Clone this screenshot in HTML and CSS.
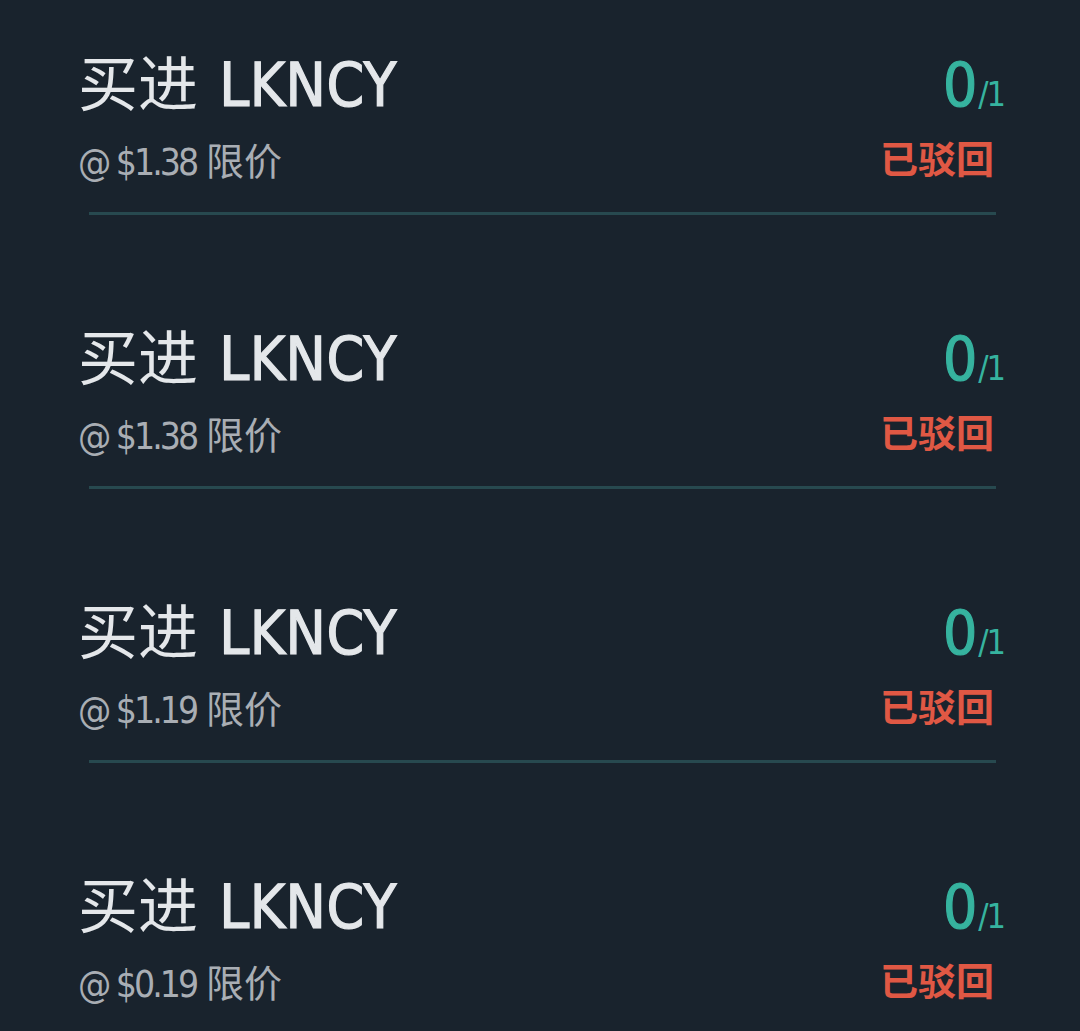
FILE: index.html
```html
<!DOCTYPE html>
<html lang="zh-CN">
<head>
    <meta charset="UTF-8">
    <meta name="viewport" content="width=device-width, initial-scale=1.0">
    <title>订单</title>
    <link rel="stylesheet" href="styles.css">
</head>
<body>
    <div class="orders">
        <div class="order">
            <div class="order-head">
                <span class="order-title">买进 <span class="symbol">LKNCY</span></span>
                <span class="order-fill"><span class="filled">0</span><span class="total">/1</span></span>
            </div>
            <div class="order-sub">
                <span class="order-price"><span class="amount">@ $1.38</span> 限价</span>
                <span class="order-status">已驳回</span>
            </div>
            <div class="divider"></div>
        </div>
        <div class="order">
            <div class="order-head">
                <span class="order-title">买进 <span class="symbol">LKNCY</span></span>
                <span class="order-fill"><span class="filled">0</span><span class="total">/1</span></span>
            </div>
            <div class="order-sub">
                <span class="order-price"><span class="amount">@ $1.38</span> 限价</span>
                <span class="order-status">已驳回</span>
            </div>
            <div class="divider"></div>
        </div>
        <div class="order">
            <div class="order-head">
                <span class="order-title">买进 <span class="symbol">LKNCY</span></span>
                <span class="order-fill"><span class="filled">0</span><span class="total">/1</span></span>
            </div>
            <div class="order-sub">
                <span class="order-price"><span class="amount">@ $1.19</span> 限价</span>
                <span class="order-status">已驳回</span>
            </div>
            <div class="divider"></div>
        </div>
        <div class="order">
            <div class="order-head">
                <span class="order-title">买进 <span class="symbol">LKNCY</span></span>
                <span class="order-fill"><span class="filled">0</span><span class="total">/1</span></span>
            </div>
            <div class="order-sub">
                <span class="order-price"><span class="amount">@ $0.19</span> 限价</span>
                <span class="order-status">已驳回</span>
            </div>
        </div>
    </div>
</body>
</html>
```

FILE: styles.css
```css
body {
    margin: 0;
    padding: 0;
    background: #19232d;
    font-family: "DejaVu Sans Condensed", "Noto Sans CJK SC", sans-serif;
    overflow: hidden;
}

.orders {
    padding: 0 78px;
}

.order {
    padding-top: 109px;
}

.order:first-child {
    padding-top: 50px;
}

.order-head {
    display: flex;
    justify-content: space-between;
    align-items: baseline;
    height: 70px;
    line-height: 70px;
}

.order-title {
    font-size: 60px;
    color: #e4e7ea;
}

.symbol {
    margin-left: 4px;
    letter-spacing: 0.5px;
    -webkit-text-stroke: 1.2px #e4e7ea;
}

.order-fill {
    color: #36b39f;
    margin-right: -2px;
}

.filled {
    font-size: 60px;
    letter-spacing: 1px;
    -webkit-text-stroke: 1.2px #36b39f;
}

.total {
    font-size: 34px;
    letter-spacing: -2px;
}

.order-sub {
    display: flex;
    justify-content: space-between;
    align-items: baseline;
    margin-top: 17px;
    height: 50px;
    line-height: 50px;
}

.order-price {
    font-size: 38px;
    color: #a9aeb4;
}

.amount {
    font-size: 37px;
    letter-spacing: -3px;
    margin-right: -1px;
}

.order-status {
    font-size: 38px;
    font-weight: 700;
    color: #e05844;
    margin-right: 8px;
    position: relative;
    top: -2px;
}

.divider {
    height: 3px;
    background: #27494f;
    margin: 25px 6px 0 11px;
}
```
